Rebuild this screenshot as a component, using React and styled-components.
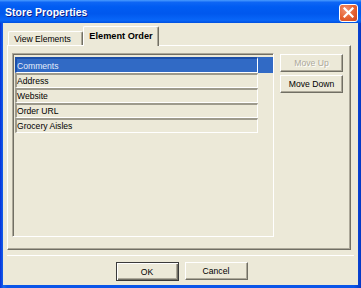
import React from 'react';
import styled, { createGlobalStyle } from 'styled-components';

const GlobalStyle = createGlobalStyle`
  html, body {
    margin: 0;
    padding: 0;
    background: #ECE9D8;
  }
  * {
    box-sizing: border-box;
  }
`;

const Window = styled.div`
  width: 361px;
  height: 288px;
  display: flex;
  flex-direction: column;
  background: linear-gradient(to right, #0831D9 0%, #166AEE 1%, #0A55E8 2%, #0A55E8 98%, #0637C4 100%);
  font-family: "Liberation Sans", Arial, sans-serif;
  font-size: 8.6px;
  color: #000;
  overflow: hidden;
`;

const TitleBar = styled.div`
  height: 23px;
  flex: none;
  display: flex;
  align-items: center;
  padding: 0 3px 0 5px;
  background: linear-gradient(to bottom, #4A9CFF 0%, #0E66F5 10%, #005CF2 30%, #0058EE 60%, #0866F8 88%, #0050E0 100%);
`;

const Title = styled.div`
  flex: 1;
  color: #fff;
  font-weight: bold;
  font-size: 10.4px;
  letter-spacing: 0.1px;
  text-shadow: 1px 1px #0F1F8A;
  padding-top: 1px;
`;

const CloseButton = styled.div`
  width: 19px;
  height: 18px;
  margin-top: 2px;
  border: 1px solid #fff;
  border-radius: 3px;
  background: radial-gradient(circle at 35% 30%, #F29474 0%, #E5602F 55%, #CC4420 100%);
  display: flex;
  align-items: center;
  justify-content: center;
`;

const Body = styled.div`
  flex: 1;
  margin: 0 3px 3px;
  background: #ECE9D8;
  display: flex;
  flex-direction: column;
`;

const TabStrip = styled.div`
  height: 22px;
  flex: none;
  display: flex;
  align-items: flex-end;
  padding-left: 5px;
`;

const Tab = styled.div`
  width: ${(p) => (p.$active ? 76 : 75)}px;
  height: ${(p) => (p.$active ? 20 : 14)}px;
  margin-bottom: ${(p) => (p.$active ? -1 : 0)}px;
  position: relative;
  z-index: ${(p) => (p.$active ? 2 : 0)};
  background: #ECE9D8;
  border-top: 1px solid #fff;
  border-left: 1px solid #fff;
  border-right: 1px solid #716F64;
  box-shadow: inset -1px 0 #ACA899;
  border-top-left-radius: 2px;
  border-top-right-radius: 2px;
  display: flex;
  align-items: ${(p) => (p.$active ? 'flex-start' : 'center')};
  justify-content: center;
  padding-top: ${(p) => (p.$active ? 4 : 0)}px;
  font-weight: ${(p) => (p.$active ? 'bold' : 'normal')};
  font-size: ${(p) => (p.$active ? 9.2 : 8.6)}px;
  padding-right: ${(p) => (p.$active ? 0 : 6)}px;
`;

const Panel = styled.div`
  width: 344px;
  height: 205px;
  margin-left: 4px;
  flex: none;
  display: flex;
  align-items: flex-start;
  padding: 7px 0 0 4px;
  border-top: 1px solid #fff;
  border-left: 1px solid #fff;
  border-right: 1px solid #716F64;
  border-bottom: 1px solid #716F64;
  box-shadow: inset -1px -1px #ACA899;
`;

const ListFrame = styled.div`
  width: 262px;
  height: 184px;
  flex: none;
  border-top: 1px solid #ACA899;
  border-left: 1px solid #ACA899;
  border-right: 1px solid #fff;
  border-bottom: 1px solid #fff;
  box-shadow: inset 1px 1px #716F64;
  padding: 3px 0 0 2px;
  display: flex;
  flex-direction: column;
`;

const Row = styled.div`
  height: ${(p) => (p.$selected ? 16 : 15)}px;
  display: flex;
`;

const Cell = styled.div`
  width: 243px;
  display: flex;
  align-items: center;
  padding-left: 0;
  border-top: 2px solid ${(p) => (p.$selected ? '#1C4FA8' : '#9D9A8C')};
  border-left: 2px solid ${(p) => (p.$selected ? '#1C4FA8' : '#9D9A8C')};
  border-right: 1px solid #fff;
  border-bottom: 1px solid #fff;
  background: ${(p) => (p.$selected ? '#316AC5' : 'transparent')};
  color: ${(p) => (p.$selected ? '#E4ECFA' : '#000')};
  white-space: nowrap;
`;

const Tail = styled.div`
  width: 15px;
  background: ${(p) => (p.$selected ? '#316AC5' : 'transparent')};
`;

const SideButtons = styled.div`
  display: flex;
  flex-direction: column;
  gap: 3px;
  margin: 1px 0 0 6px;
`;

const Button = styled.div`
  width: 63px;
  height: ${(p) => (p.$default ? 19 : 18)}px;
  display: flex;
  align-items: center;
  justify-content: center;
  background: #ECE9D8;
  border-top: 1px solid ${(p) => (p.$default ? '#3A3A3A' : '#fff')};
  border-left: 1px solid ${(p) => (p.$default ? '#3A3A3A' : '#fff')};
  border-right: 1px solid ${(p) => (p.$default ? '#3A3A3A' : '#716F64')};
  border-bottom: 1px solid ${(p) => (p.$default ? '#3A3A3A' : '#716F64')};
  box-shadow: ${(p) => (p.$default
    ? 'inset 1px 1px #fff, inset -1px -1px #716F64, inset -2px -2px #ACA899'
    : 'inset -1px -1px #ACA899')};
  color: ${(p) => (p.$disabled ? '#ACA899' : '#000')};
  text-shadow: ${(p) => (p.$disabled ? '1px 1px #fff' : 'none')};
`;

const Separator = styled.div`
  height: 1px;
  margin: 5px 4px 0 4px;
  background: #fff;
  flex: none;
`;

const Footer = styled.div`
  display: flex;
  justify-content: center;
  gap: 6px;
  margin-top: 6px;
  padding-left: 2px;
`;

const rows = ['Comments', 'Address', 'Website', 'Order URL', 'Grocery Aisles'];

const App = () => (
  <>
    <GlobalStyle />
    <Window>
      <TitleBar>
        <Title>Store Properties</Title>
        <CloseButton>
          <svg width="11" height="11" viewBox="0 0 11 11">
            <path d="M1.5 1.5 L9.5 9.5 M9.5 1.5 L1.5 9.5" stroke="#fff" strokeWidth="2.2" strokeLinecap="square" />
          </svg>
        </CloseButton>
      </TitleBar>
      <Body>
        <TabStrip>
          <Tab>View Elements</Tab>
          <Tab $active>Element Order</Tab>
        </TabStrip>
        <Panel>
          <ListFrame>
            {rows.map((name, i) => (
              <Row key={name} $selected={i === 0}>
                <Cell $selected={i === 0}>{name}</Cell>
                <Tail $selected={i === 0} />
              </Row>
            ))}
          </ListFrame>
          <SideButtons>
            <Button $disabled>Move Up</Button>
            <Button>Move Down</Button>
          </SideButtons>
        </Panel>
        <Separator />
        <Footer>
          <Button $default>OK</Button>
          <Button>Cancel</Button>
        </Footer>
      </Body>
    </Window>
  </>
);

export default App;
